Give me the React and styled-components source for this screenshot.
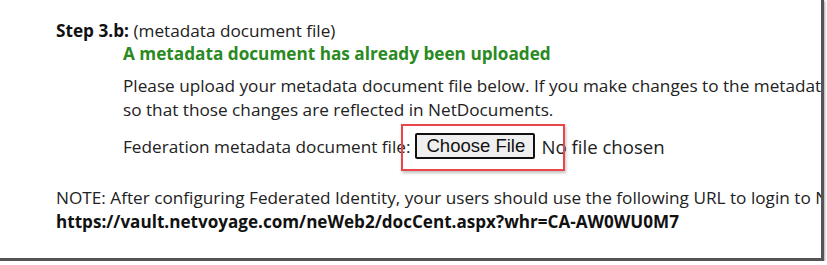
import styled, { createGlobalStyle } from "styled-components";

const GlobalStyle = createGlobalStyle`
  body {
    margin: 0;
    background: #ffffff;
  }
`;

const Frame = styled.div`
  width: 821px;
  height: 258px;
  overflow: hidden;
  background: #fff;
  border-right: 3px solid #555;
  border-bottom: 3px solid #555;
  box-shadow: 1px 1px 2px rgba(0, 0, 0, 0.35);
  font-family: "Open Sans", "Noto Sans", sans-serif;
  font-size: 17.2px;
  color: #222;
  white-space: nowrap;
`;

const Content = styled.div`
  padding: 19px 0 0 56px;
`;

const StepTitle = styled.div`
  line-height: 24px;
`;

const Bold = styled.b`
  font-weight: 700;
  color: #111;
`;

const Indented = styled.div`
  padding-left: 67px;
`;

const Notice = styled.div`
  color: #2a8a1f;
  font-weight: 700;
  line-height: 24px;
  margin-top: -1px;
`;

const Paragraph = styled.p`
  margin: 8px 0 0;
  line-height: 24px;
`;

const FileRow = styled.div`
  display: flex;
  align-items: center;
  margin-top: 9px;
  height: 30px;
`;

const Highlight = styled.span`
  position: relative;
  display: inline-flex;
  align-items: center;
  margin-left: 5px;
  &::before {
    content: "";
    position: absolute;
    left: -14px;
    top: -9px;
    width: 160px;
    height: 43px;
    border: 2px solid #e8464a;
    box-shadow: 1px 2px 3px rgba(0, 0, 0, 0.25);
    pointer-events: none;
  }
`;

const ChooseButton = styled.button`
  font-family: "Liberation Sans", Arial, sans-serif;
  font-size: 18.5px;
  color: #111;
  background: #efefef;
  border: 2px solid #111;
  border-radius: 2px;
  padding: 0 9px;
  height: 26px;
  width: 120px;
  line-height: 20px;
`;

const NoFile = styled.span`
  margin-left: 6px;
  font-size: 18.6px;
`;

const Note = styled.div`
  margin-top: 25px;
  line-height: 24px;
`;

const Url = styled.b`
  font-weight: 700;
  font-size: 17.1px;
  color: #111;
`;

export default function App() {
  return (
    <>
      <GlobalStyle />
      <Frame>
        <Content>
          <StepTitle>
            <Bold>Step 3.b:</Bold> (metadata document file)
          </StepTitle>
          <Indented>
            <Notice>A metadata document has already been uploaded</Notice>
            <Paragraph>
              Please upload your metadata document file below. If you make changes to the metadata
              <br />
              so that those changes are reflected in NetDocuments.
            </Paragraph>
            <FileRow>
              Federation metadata document file:
              <Highlight>
                <ChooseButton type="button">Choose File</ChooseButton>
                <NoFile>No file chosen</NoFile>
              </Highlight>
            </FileRow>
          </Indented>
          <Note>
            NOTE: After configuring Federated Identity, your users should use the following URL to login to NetDocuments:
            <br />
            <Url>https://vault.netvoyage.com/neWeb2/docCent.aspx?whr=CA-AW0WU0M7</Url>
          </Note>
        </Content>
      </Frame>
    </>
  );
}
